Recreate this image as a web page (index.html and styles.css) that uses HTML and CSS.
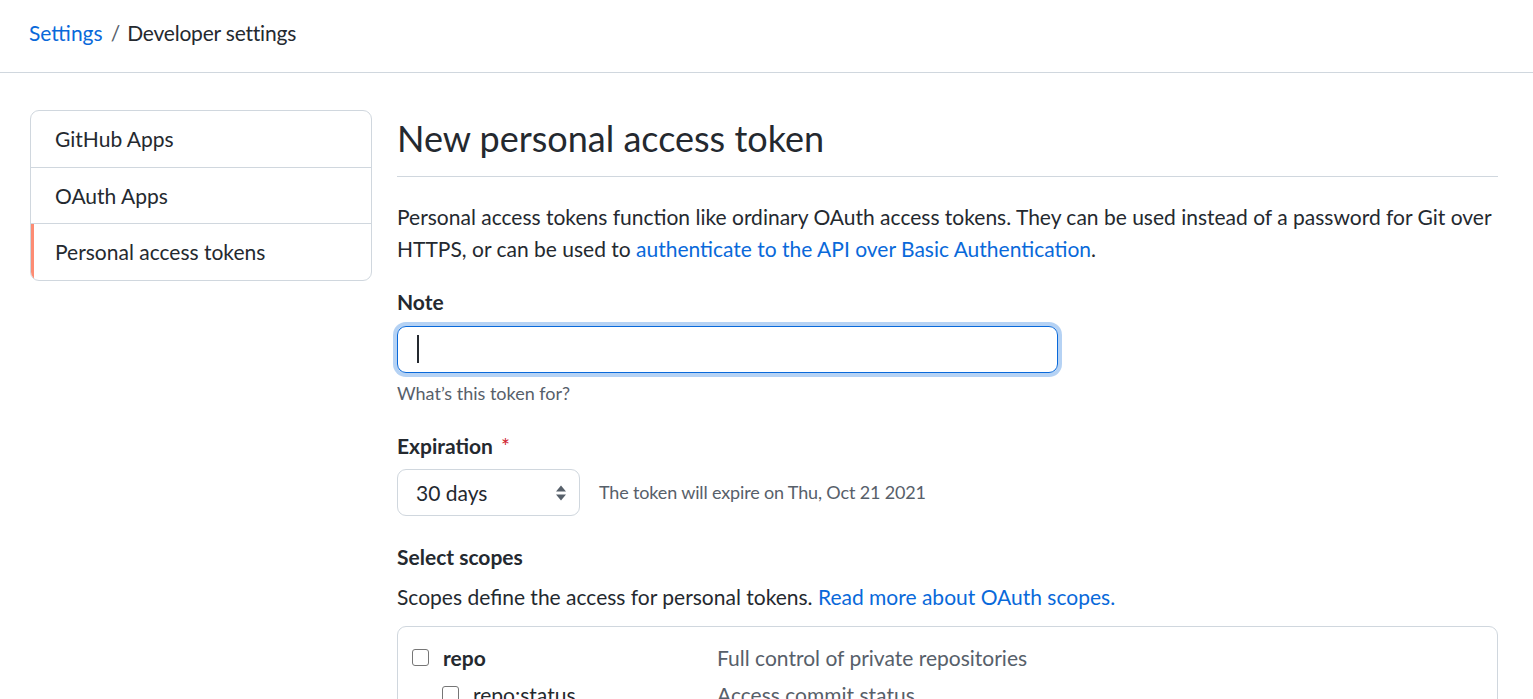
FILE: index.html
```html
<!DOCTYPE html>
<html lang="en">
<head>
<meta charset="utf-8">
<title>New personal access token</title>
<link rel="stylesheet" href="styles.css">
</head>
<body>
<header class="top">
  <nav class="crumbs"><a href="#" class="link">Settings</a><span class="sep">/</span><span class="crumb-current">Developer settings</span></nav>
</header>
<div class="layout">
  <aside class="side">
    <nav class="menu">
      <a href="#" class="menu-item">GitHub Apps</a>
      <a href="#" class="menu-item">OAuth Apps</a>
      <a href="#" class="menu-item active">Personal access tokens</a>
    </nav>
  </aside>
  <main class="main">
    <div class="subhead"><h2 class="subhead-title">New personal access token</h2></div>
    <p class="intro">Personal access tokens function like ordinary OAuth access tokens. They can be used instead of a password for Git over HTTPS, or can be used to <a href="#" class="link">authenticate to the API over Basic Authentication</a>.</p>

    <div class="form-group">
      <div class="label">Note</div>
      <div class="input focused"><span class="caret"></span></div>
      <div class="note">What’s this token for?</div>
    </div>

    <div class="form-group">
      <div class="label">Expiration <span class="req">*</span></div>
      <div class="exp-row">
        <div class="select"><span>30 days</span>
          <svg class="updown" width="12" height="18" viewBox="0 0 12 18"><path d="M6 1.5 L11 7.5 H1 Z" fill="#57606a"/><path d="M6 16.5 L11 10.5 H1 Z" fill="#57606a"/></svg>
        </div>
        <span class="exp-note">The token will expire on Thu, Oct 21 2021</span>
      </div>
    </div>

    <div class="label scopes-title">Select scopes</div>
    <p class="scopes-desc">Scopes define the access for personal tokens. <a href="#" class="link">Read more about OAuth scopes.</a></p>

    <div class="scopes">
      <div class="scope-row">
        <label class="scope-name"><span class="check"></span><strong>repo</strong></label>
        <span class="scope-desc">Full control of private repositories</span>
      </div>
      <div class="scope-row sub">
        <label class="scope-name"><span class="check"></span><span>repo:status</span></label>
        <span class="scope-desc">Access commit status</span>
      </div>
    </div>
  </main>
</div>
</body>
</html>
```

FILE: styles.css
```css
* { box-sizing: border-box; }
html, body { margin: 0; padding: 0; }
body {
  font-family: Lato, "Noto Sans", "Liberation Sans", sans-serif;
  font-size: 21px;
  line-height: 31.5px;
  color: #24292f;
  background: #ffffff;
  overflow: hidden;
}
a { text-decoration: none; }
.link { color: #0969da; }

.top {
  height: 73px;
  border-bottom: 1px solid #d0d7de;
  padding: 17px 29px 0;
}
.crumbs { display: flex; align-items: baseline; }
.sep { color: #57606a; margin: 0 7px 0 8px; }
.crumb-current { color: #24292f; letter-spacing: -0.2px; }

.layout {
  display: flex;
  gap: 25px;
  padding: 37px 35px 0 30px;
}
.side { width: 342px; flex: none; }
.menu {
  display: flex;
  flex-direction: column;
  border: 1px solid #d0d7de;
  border-radius: 9px;
  overflow: hidden;
}
.menu-item {
  display: block;
  padding: 12px 24px;
  color: #24292f;
  border-top: 1px solid #d0d7de;
}
.menu-item:first-child { border-top: none; }
.menu-item.active { box-shadow: inset 3px 0 0 #fd8c73; }

.main { flex: 1; min-width: 0; }
.subhead {
  border-bottom: 1px solid #d0d7de;
  padding-bottom: 15px;
  margin-top: 6px;
  margin-bottom: 24px;
}
.subhead-title {
  margin: 0;
  font-size: 36px;
  line-height: 45px;
  font-weight: 400;
}
.intro { margin: 0 0 22px; }

.form-group { margin-bottom: 23px; }
.label { font-weight: 700; margin-bottom: 8px; }
.req { color: #cf222e; font-weight: 400; margin-left: 3px; }
.input {
  width: 661px;
  height: 47px;
  border: 1px solid #0969da;
  border-radius: 9px;
  padding: 8px 19px;
  display: flex;
  align-items: center;
}
.input.focused { box-shadow: 0 0 0 4px rgba(9, 105, 218, 0.3); }
.caret { width: 1.5px; height: 28px; background: #24292f; }
.note {
  margin-top: 7px;
  font-size: 18px;
  line-height: 27px;
  color: #57606a;
}

.exp-row { display: flex; align-items: center; gap: 19px; }
.select {
  width: 183px;
  height: 47px;
  border: 1px solid #d0d7de;
  border-radius: 9px;
  padding: 0 12px 0 18px;
  display: flex;
  align-items: center;
  justify-content: space-between;
}
.updown { display: block; }
.exp-note { font-size: 18px; color: #57606a; letter-spacing: -0.15px; }

.scopes-title { margin-top: 25px; margin-bottom: 8px; }
.scopes-desc { margin: 0 0 14px; }

.scopes {
  border: 1px solid #d0d7de;
  border-radius: 9px;
  padding: 15px 14px 14px;
}
.scope-row {
  display: grid;
  grid-template-columns: 305px 1fr;
  margin-bottom: 5px;
}
.scope-name { display: flex; align-items: center; gap: 14px; }
.scope-row.sub .scope-name { padding-left: 30px; }
.check {
  width: 17px;
  height: 17px;
  border: 1.5px solid #767676;
  border-radius: 3px;
  flex: none;
}
.scope-desc { color: #57606a; }
```
